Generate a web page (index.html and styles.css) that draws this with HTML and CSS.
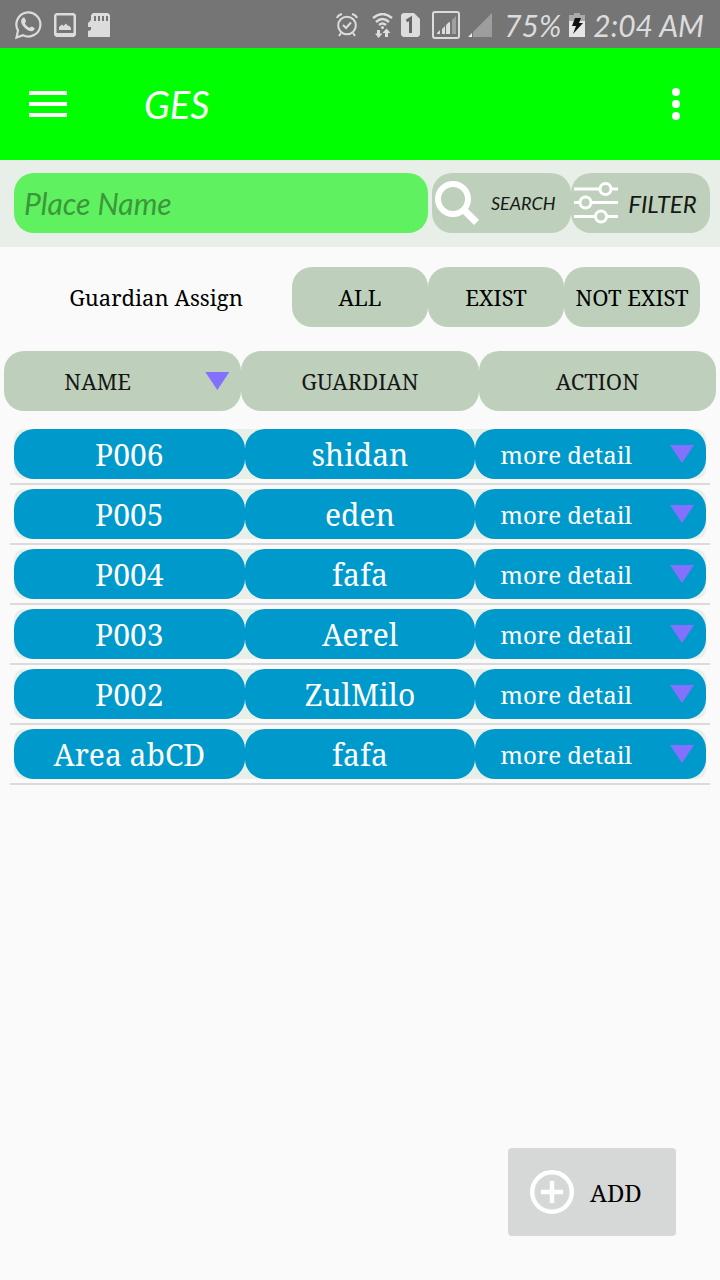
FILE: index.html
```html
<!DOCTYPE html>
<html lang="en">
<head>
<meta charset="utf-8">
<meta name="viewport" content="width=device-width, initial-scale=1">
<title>GES</title>
<link rel="stylesheet" href="styles.css">
</head>
<body>
<div class="status">
  <div class="status-group notices">
    <svg width="28" height="30" viewBox="0 0 28 30" fill="none" stroke="#dcdcdc" stroke-width="2.2"><path d="M2.5 27.5 4 20.5A12 12 0 1 1 9 25.2Z"/><path fill="#dcdcdc" stroke="none" d="M8 8.5C9 7 10.500 7 11 8.500L12 11C12.200 12 10.800 12.600 11 13.500C12 15.500 13.500 17 15.500 17.800C16.500 18 17 16.400 18 16.600L20.500 18C21 19.500 19.500 21 18 21.200C13 21.500 7 15 7 11Z"/></svg>
    <svg width="22" height="24" viewBox="0 0 22 24" fill="#dcdcdc"><path fill-rule="evenodd" d="M2 0H20L22 2V22L20 24H2L0 22V2ZM2.500 2.500V20H19.500V2.500Z"/><path d="M5 17V14L8 11.500 9.500 13 12 10.500 14 13 15 12.500 17 15V17Z"/></svg>
    <svg width="22" height="24" viewBox="0 0 22 24" fill="#dcdcdc"><path fill-rule="evenodd" d="M5 0H20L22 2V24H0V18L3 17V14H0V10L3 7V2ZM6 3V8H8V3ZM10 3V8H12V3ZM14 3V8H16V3ZM18 3V8H20V3Z"/></svg>
  </div>
  <div class="status-group">
    <svg width="22" height="24" viewBox="0 0 22 24" fill="none" stroke="#dcdcdc" stroke-width="2"><circle cx="11" cy="12.500" r="8.800"/><path d="M1 5Q2 2 6 1M21 5Q20 2 16 1M5 20 3 23M17 20 19 23M7 12 10 15 15 9.500"/></svg>
    <svg class="wifi" width="21" height="25" viewBox="0 0 21 25" fill="none" stroke="#dcdcdc" stroke-width="2.400"><path d="M1 5Q10.500-3 20 5M4 9Q10.500 3 17 9M7 12Q10.500 9 14 12"/><circle cx="10.500" cy="14.500" r="1.500" fill="#dcdcdc" stroke="none"/><path fill="#dcdcdc" stroke="none" d="M5 17H8V20.500H10.500L6.500 25 3 20.500H5ZM13 24V20H10.500L14.500 15.500 18.500 20H16V24Z"/></svg>
    <svg class="sim" width="19" height="24" viewBox="0 0 19 24"><path fill="#dcdcdc" d="M2 0H13L19 6V22L17 24H2L0 22V2Z"/><path fill="none" stroke="#666" stroke-width="3" d="M5.500 8 9.500 5.500V20"/></svg>
    <svg width="28" height="28" viewBox="0 0 28 28"><rect x="1" y="1" width="26" height="26" rx="2" fill="none" stroke="#dcdcdc" stroke-width="2"/><path fill="#dcdcdc" d="M5 23V22L8 19V23ZM10 23V18L13 15V23ZM14 23V14L17 11V23Z"/><path fill="#e4e4e4" d="M17 23V12L18 10.500V23Z"/><path fill="#a0a0a0" d="M20 23V9L24 5V23Z"/></svg>
    <svg width="24" height="24" viewBox="0 0 24 24"><path fill="#9d9d9d" d="M5 24V19L24 0V24Z"/><path fill="#eee" d="M0 24 4 20V24Z"/></svg>
    <span class="battery">75%</span>
    <svg width="16" height="24" viewBox="0 0 16 24"><path fill="#aaa" d="M0 2H5V0H11V2H16V8H0Z"/><path fill="#e6e6e6" d="M0 8H16V24H0Z"/><path fill="#111" d="M6 5H12L10 10H14L4 21 7 13H3Z"/></svg>
    <span class="clock">2:04 AM</span>
  </div>
</div>

<header class="appbar">
  <button class="icon-btn" type="button" aria-label="Open menu"><svg width="38" height="26" viewBox="0 0 38 26" fill="#fff"><path d="M0 0H38V4H0ZM0 11H38V15H0ZM0 22H38V26H0Z"/></svg></button>
  <h1 class="title">GES</h1>
  <button class="icon-btn" type="button" aria-label="More options"><svg width="8" height="32" viewBox="0 0 8 32" fill="#fff"><circle cx="4" cy="4" r="4"/><circle cx="4" cy="16" r="4"/><circle cx="4" cy="28" r="4"/></svg></button>
</header>

<form class="search">
  <input class="place" type="text" placeholder="Place Name" aria-label="Place Name">
  <div class="search-actions">
    <button class="pill tool" type="button"><svg width="44" height="44" viewBox="0 0 44 44" fill="none" stroke="#fff"><circle cx="18" cy="18" r="15" stroke-width="6"/><path d="M28.500 28.500 41.500 41.500" stroke-width="7"/></svg><span class="tool-text small">SEARCH</span></button>
    <button class="pill tool" type="button"><svg width="44" height="44" viewBox="0 0 44 44" fill="none" stroke="#fff" stroke-width="3"><path d="M0 8H25M38 8H44M0 21.500H6M18 21.500H44M0 35.500H21M33 35.500H44"/><circle cx="31.500" cy="8" r="5.500"/><circle cx="11.500" cy="21.500" r="5.500"/><circle cx="27" cy="35.500" r="5.500"/></svg><span class="tool-text">FILTER</span></button>
  </div>
</form>

<main class="content">
  <div class="assign" role="group" aria-labelledby="assign">
    <span class="assign-label" id="assign">Guardian Assign</span>
    <button class="pill" type="button">ALL</button>
    <button class="pill" type="button">EXIST</button>
    <button class="pill" type="button">NOT EXIST</button>
  </div>

  <table class="places">
    <thead>
      <tr class="head-row">
        <th class="pill head"><span class="picker"><select class="sort" aria-label="Sort column"><option>NAME</option></select></span></th>
        <th class="pill head">GUARDIAN</th>
        <th class="pill head">ACTION</th>
      </tr>
    </thead>
    <tbody>
      <tr class="row"><td class="cell"><span class="value">P006</span></td><td class="cell"><span class="value">shidan</span></td><td class="cell"><span class="value picker"><select class="detail" aria-label="Actions for P006"><option>more detail</option></select></span></td></tr>
      <tr class="row"><td class="cell"><span class="value">P005</span></td><td class="cell"><span class="value">eden</span></td><td class="cell"><span class="value picker"><select class="detail" aria-label="Actions for P005"><option>more detail</option></select></span></td></tr>
      <tr class="row"><td class="cell"><span class="value">P004</span></td><td class="cell"><span class="value">fafa</span></td><td class="cell"><span class="value picker"><select class="detail" aria-label="Actions for P004"><option>more detail</option></select></span></td></tr>
      <tr class="row"><td class="cell"><span class="value">P003</span></td><td class="cell"><span class="value">Aerel</span></td><td class="cell"><span class="value picker"><select class="detail" aria-label="Actions for P003"><option>more detail</option></select></span></td></tr>
      <tr class="row"><td class="cell"><span class="value">P002</span></td><td class="cell"><span class="value">ZulMilo</span></td><td class="cell"><span class="value picker"><select class="detail" aria-label="Actions for P002"><option>more detail</option></select></span></td></tr>
      <tr class="row"><td class="cell"><span class="value">Area abCD</span></td><td class="cell"><span class="value">fafa</span></td><td class="cell"><span class="value picker"><select class="detail" aria-label="Actions for Area abCD"><option>more detail</option></select></span></td></tr>
    </tbody>
  </table>

  <button class="add" type="button"><svg width="44" height="44" viewBox="0 0 44 44" fill="none" stroke="#fff" stroke-width="4.400"><circle cx="22" cy="22" r="19.800"/><path d="M22 11V33M11 22H33"/></svg>ADD</button>
</main>
</body>
</html>
```

FILE: styles.css
```css
* { box-sizing: border-box; }

body {
  margin: 0;
  min-height: 100vh;
  display: flex;
  flex-direction: column;
  background: #fafafa;
  color: #000;
  font-family: "Noto Serif", "DejaVu Serif Condensed", "Liberation Serif", serif;
  font-size: 22px;
}

button, input, select {
  margin: 0;
  padding: 0;
  border: 0;
  background: none;
  color: inherit;
  font: inherit;
}

svg { display: block; flex: none; }

.status, .title, .place, .tool {
  font-family: Lato, "Liberation Sans", sans-serif;
  font-style: italic;
}

.status {
  height: 48px;
  padding: 2px 16px 0 14px;
  display: flex;
  align-items: center;
  justify-content: space-between;
  background: #757575;
  color: #dcdcdc;
  font-size: 30px;
}

.status-group { display: flex; align-items: center; gap: 8px; }
.notices { gap: 12px; }
.wifi { margin-left: 6px; }
.sim { margin-right: 4px; }
.battery { padding-left: 4px; }

.appbar {
  height: 112px;
  padding: 0 40px 0 29px;
  display: flex;
  align-items: center;
  background: #00ff00;
  color: #fff;
}

.icon-btn { padding: 8px 0; }

.title {
  flex: 1;
  margin: 0 0 0 77px;
  font-size: 38px;
  font-weight: 400;
}

.search {
  padding: 13px 10px 14px 14px;
  display: flex;
  gap: 4px;
  background: #e8efe8;
}

.place {
  flex: 1;
  min-width: 0;
  height: 60px;
  padding: 0 10px;
  border-radius: 20px;
  background: #60f160;
  font-size: 30px;
}

.place::placeholder { color: #3a973a; opacity: 1; }

.search-actions { flex: 0 0 40%; display: flex; }

.pill {
  flex: 1;
  min-width: 0;
  height: 60px;
  border-radius: 20px;
  background: #bed0bc;
  white-space: nowrap;
}

.tool {
  padding: 0 3px;
  display: flex;
  align-items: center;
  color: #161816;
}

.tool-text { flex: 1; font-size: 24px; }
.small { font-size: 18px; }

.content {
  flex: 1;
  display: flex;
  flex-direction: column;
}

.assign {
  padding: 20px 20px 24px;
  display: flex;
  align-items: center;
}

.assign-label { flex: 2; text-align: center; }

.places, thead, tbody { display: block; }

.head-row { display: flex; margin: 0 4px 14px; }

.head {
  display: flex;
  align-items: center;
  justify-content: center;
  padding: 0;
  color: #161816;
  font-weight: 400;
}

.row {
  display: flex;
  margin: 0 10px;
  padding: 4px;
  border-bottom: 2px solid #dadada;
}

.cell { flex: 1; min-width: 0; padding: 0; background: #e8efe8; }
.cell:first-child { border-radius: 10px 0 0 10px; }
.cell:last-child { border-radius: 0 10px 10px 0; }

.value {
  height: 50px;
  display: flex;
  align-items: center;
  justify-content: center;
  border-radius: 20px;
  background: #0099cc;
  color: #fff;
  font-size: 30px;
}

.picker {
  width: 100%;
  display: flex;
  align-items: center;
  padding-right: 12px;
}

.picker::after {
  content: "";
  width: 24px;
  height: 18px;
  background: #8470ff;
  clip-path: polygon(0 0, 100% 0, 50% 100%);
}

.sort, .detail {
  flex: 1;
  min-width: 0;
  height: 50px;
  appearance: none;
}

.sort { padding: 0 14px 0 0; text-align: center; text-align-last: center; }
.detail { padding-left: 25px; font-size: 24px; }

.add {
  min-width: 168px;
  height: 88px;
  margin: auto 44px 44px auto;
  padding: 0 22px;
  display: flex;
  align-items: center;
  gap: 16px;
  border-radius: 4px;
  background: #d6d7d7;
  font-size: 24px;
}
```
